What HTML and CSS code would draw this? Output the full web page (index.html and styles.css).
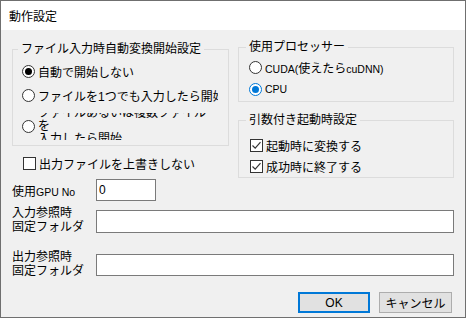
FILE: index.html
```html
<!DOCTYPE html>
<html lang="ja">
<head>
  <meta charset="UTF-8">
  <title>動作設定</title>
  <link rel="stylesheet" href="styles.css">
</head>
<body>

  <div class="window">
    <div class="titlebar">動作設定</div>

    <div class="content">
      <div class="top">
        <!-- 左側 -->
        <div class="col-left">
          <fieldset class="group group-start">
            <legend>ファイル入力時自動変換開始設定</legend>
            <label class="opt row-a"><span class="radio checked"></span><span class="txt">自動で開始しない</span></label>
            <label class="opt row-b"><span class="radio"></span><span class="txt clip">ファイルを1つでも入力したら開始</span></label>
            <label class="opt row-c"><span class="radio"></span><span class="txt multi"><span>ファイルあるいは複数ファイル<br>を<br>入力したら開始</span></span></label>
          </fieldset>
          <label class="opt overwrite"><span class="check"></span><span class="txt">出力ファイルを上書きしない</span></label>
        </div>

        <!-- 右側 -->
        <div class="col-right">
          <fieldset class="group group-proc">
            <legend>使用プロセッサー</legend>
            <label class="opt row-p"><span class="radio"></span><span class="txt"><span class="lat">CUDA(</span>使えたら<span class="lat">cuDNN)</span></span></label>
            <label class="opt row-p"><span class="radio focus"></span><span class="txt"><span class="lat">CPU</span></span></label>
          </fieldset>
          <fieldset class="group group-args">
            <legend>引数付き起動時設定</legend>
            <label class="opt row-q">
              <span class="check">
                <svg width="11" height="11" viewBox="0 0 11 11"><polyline points="1.5,5.5 4.2,8.2 9.5,2.2" fill="none" stroke="#333" stroke-width="1.2"/></svg>
              </span>
              <span class="txt">起動時に変換する</span>
            </label>
            <label class="opt row-q">
              <span class="check">
                <svg width="11" height="11" viewBox="0 0 11 11"><polyline points="1.5,5.5 4.2,8.2 9.5,2.2" fill="none" stroke="#333" stroke-width="1.2"/></svg>
              </span>
              <span class="txt">成功時に終了する</span>
            </label>
          </fieldset>
        </div>
      </div>

      <div class="field field-gpu">
        <span class="field-label">使用<span class="lat">GPU No</span></span>
        <input class="text-input gpu" type="text" value="0">
      </div>
      <div class="field field-in">
        <span class="field-label two">入力参照時<br>固定フォルダ</span>
        <input class="text-input wide" type="text" value="">
      </div>
      <div class="field field-out">
        <span class="field-label two">出力参照時<br>固定フォルダ</span>
        <input class="text-input wide" type="text" value="">
      </div>

      <div class="buttons">
        <button class="btn btn-default">OK</button>
        <button class="btn">キャンセル</button>
      </div>
    </div>
  </div>

</body>
</html>
```

FILE: styles.css
```css
html, body {
  margin: 0;
  padding: 0;
  background: #fff;
}

/* Schrift für alles */
.window, .window * {
  font-family: "Liberation Sans", "Noto Sans CJK JP", sans-serif;
  font-size: 12px;
  color: #000;
}
/* lateinische Teile sind im Original schmaler */
.window .lat {
  font-size: 10.5px;
}

/* Fenster */
.window {
  width: 466px;
  height: 318px;
  box-sizing: border-box;
  border: 1px solid #6f6f6f;
  background: #f0f0f0;
  display: flex;
  flex-direction: column;
}
.titlebar {
  height: 29px;
  background: #fff;
  padding-left: 8px;
  display: flex;
  align-items: center;
}

.content {
  flex: 1;
  padding: 0 11px;
  display: flex;
  flex-direction: column;
}

/* Zwei Spalten oben */
.top {
  display: flex;
  gap: 9px;
  align-items: flex-start;
}
.col-left {
  width: 217px;
  display: flex;
  flex-direction: column;
}
.col-right {
  flex: 1;
  display: flex;
  flex-direction: column;
}

/* Gruppenrahmen */
.group {
  margin: 0;
  border: 1px solid #dcdcdc;
  min-width: 0;
}
.group legend {
  padding: 0 3px;
  margin-left: -4px;
  line-height: 14px;
}
.group-start {
  margin-top: 12px;
  padding: 3px 0 5px 9px;
}
.group-proc {
  margin-top: 10px;
  padding: 2px 0 1px 10px;
}
.group-proc legend {
  margin-left: -3px;
}
.group-args {
  margin-top: 11px;
  padding: 8px 0 0 11px;
}
.group-args legend {
  margin-left: -4px;
}

/* Optionen */
.opt {
  display: flex;
  align-items: center;
  gap: 3px;
  white-space: nowrap;
}
.row-a { height: 24px; }
.row-b { height: 25px; }
.row-c { height: 27px; margin-top: 5px; }
.row-p { height: 22px; }
.row-q { height: 21px; }
.overwrite {
  height: 16px;
  margin-top: 9px;
  margin-left: 11px;
}

.txt.clip {
  width: 180px;
  overflow: hidden;
}
.txt.multi {
  width: 180px;
  height: 27px;
  overflow: hidden;
  display: flex;
  align-items: center;
  line-height: 13px;
  white-space: normal;
}

/* Radio */
.radio {
  width: 13px;
  height: 13px;
  box-sizing: border-box;
  border: 1px solid #333;
  border-radius: 50%;
  background: #fff;
  display: flex;
  align-items: center;
  justify-content: center;
  flex-shrink: 0;
}
.radio.checked::after,
.radio.focus::after {
  content: '';
  width: 7px;
  height: 7px;
  border-radius: 50%;
  background: #000;
}
.radio.focus {
  border-color: #0078d7;
}
.radio.focus::after {
  background: #0078d7;
}

/* Checkbox */
.check {
  width: 13px;
  height: 13px;
  box-sizing: border-box;
  border: 1px solid #333;
  background: #fff;
  display: flex;
  align-items: center;
  justify-content: center;
  flex-shrink: 0;
}
.check svg {
  display: block;
}

/* Eingabezeilen */
.field {
  display: flex;
  align-items: center;
}
.field-label {
  width: 84px;
  flex-shrink: 0;
}
.field-label.two {
  align-self: flex-start;
  line-height: 14px;
}
.field-gpu {
  margin-top: 1px;
}
.field-in {
  margin-top: 7px;
}
.field-in .field-label {
  margin-top: -2px;
}
.field-out {
  margin-top: 17px;
}
.field-out .field-label {
  margin-top: -1px;
}
.text-input {
  height: 22px;
  box-sizing: border-box;
  border: 1px solid #7a7a7a;
  background: #fff;
  padding: 0 2px;
  margin: 0;
  outline: none;
}
.text-input.gpu {
  width: 60px;
}
.text-input.wide {
  flex: 1;
  min-width: 0;
}
.field-in .text-input {
  height: 23px;
}

/* Buttons */
.buttons {
  display: flex;
  justify-content: flex-end;
  gap: 9px;
  margin-top: 14px;
  padding-right: 2px;
}
.btn {
  height: 21px;
  width: 73px;
  box-sizing: border-box;
  border: 1px solid #adadad;
  background: #e1e1e1;
  padding: 0;
  margin: 0;
}
.btn-default {
  width: 72px;
  border: 2px solid #0078d7;
}
```
